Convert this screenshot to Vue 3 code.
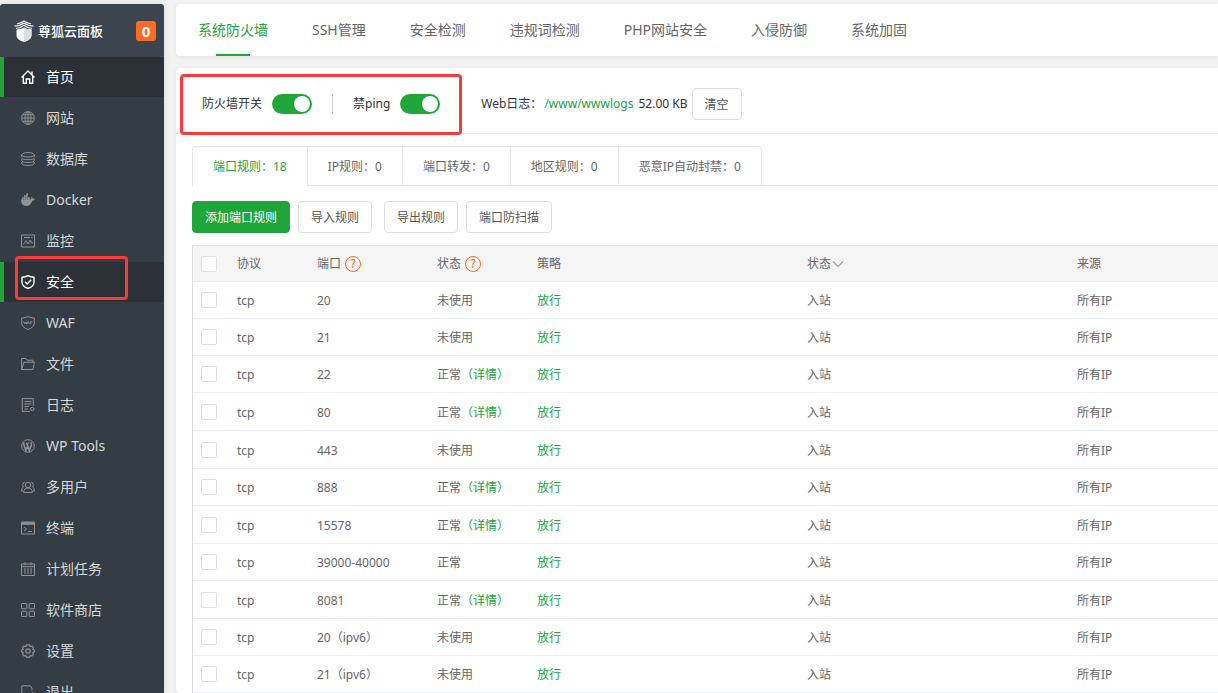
<script setup>
import { ref } from 'vue'

const menu = [
  { label: '首页', icon: 'home', on: true },
  { label: '网站', icon: 'globe' },
  { label: '数据库', icon: 'db' },
  { label: 'Docker', icon: 'docker' },
  { label: '监控', icon: 'monitor' },
  { label: '安全', icon: 'shield', on: true, marked: true },
  { label: 'WAF', icon: 'waf' },
  { label: '文件', icon: 'folder' },
  { label: '日志', icon: 'log' },
  { label: 'WP Tools', icon: 'wp' },
  { label: '多用户', icon: 'users' },
  { label: '终端', icon: 'terminal' },
  { label: '计划任务', icon: 'calendar' },
  { label: '软件商店', icon: 'apps' },
  { label: '设置', icon: 'gear' },
  { label: '退出', icon: 'exit' },
]
const tabs = ['系统防火墙', 'SSH管理', '安全检测', '违规词检测', 'PHP网站安全', '入侵防御', '系统加固']
const ruleTabs = ['端口规则：18', 'IP规则：0', '端口转发：0', '地区规则：0', '恶意IP自动封禁：0']
const rows = [
  { port: '20', state: '未使用' },
  { port: '21', state: '未使用' },
  { port: '22', state: '正常', detail: true },
  { port: '80', state: '正常', detail: true },
  { port: '443', state: '未使用' },
  { port: '888', state: '正常', detail: true },
  { port: '15578', state: '正常', detail: true },
  { port: '39000-40000', state: '正常' },
  { port: '8081', state: '正常', detail: true },
  { port: '20（ipv6）', state: '未使用' },
  { port: '21（ipv6）', state: '未使用' },
]
const firewall = ref(true)
const ping = ref(true)
</script>

<template>
  <div class="page">
    <aside class="side">
      <header class="brand">
        <svg class="logo" viewBox="0 0 20 22" aria-hidden="true">
          <g fill="none" stroke="#e8eaec" stroke-width="1.2">
            <path d="M3 3.800Q7 3.400 10 1q3 2.400 7 2.800" />
            <path d="M.5 6.200Q6.500 5.800 10 3q3.500 2.800 9.500 3.200" />
            <path d="M2 8.500Q7 8 10 5.300q3 2.700 8 3.200" />
          </g>
          <path fill="#fff" d="M2.500 9.500Q7.500 9.500 10 7.500q2.500 2 7.500 2v6q0 4-7.500 6.500-7.500-2.500-7.500-6.500z" />
          <path fill="#dcdfe1" d="M10 7.500q2.500 2 7.500 2v6q0 4-7.500 6.500z" />
        </svg>
        <span class="brand-name">尊狐云面板</span>
        <span class="count">0</span>
      </header>
      <nav>
        <a v-for="m in menu" :key="m.label" href="#" class="item" :class="{ on: m.on }">
          <svg class="icon" viewBox="0 0 14 14" aria-hidden="true">
            <g v-if="m.icon === 'home'" stroke-width="1.400">
              <path d="M.5 7.500 7 1l6.500 6.500M11 4.800V1.500M2.300 6v7.200h3V9h3.400v4.200h3V6" />
            </g>
            <g v-else-if="m.icon === 'globe'">
              <circle cx="7" cy="7" r="6.300" /><ellipse cx="7" cy="7" rx="3" ry="6.300" />
              <path d="M7 .7v12.600M.7 7h12.600M1.700 3.800h10.600M1.700 10.200h10.600" />
            </g>
            <g v-else-if="m.icon === 'db'">
              <ellipse cx="7" cy="2.800" rx="6.300" ry="2.200" />
              <path d="M.7 5.500q0 2.200 6.300 2.200t6.300-2.200M.7 8.300q0 2.200 6.300 2.200t6.300-2.200M.7 11q0 2.400 6.300 2.400t6.300-2.400M.7 2.800v2M13.300 2.800v2M.7 7v1.300M13.300 7v1.300M.7 10v1M13.300 10v1" />
            </g>
            <g v-else-if="m.icon === 'docker'" class="solid">
              <path d="M0 6.300h10q.7-.8.200-2.700 1.300.6 1.500 2 1.300-.2 2.300.4-.8 1.700-2.700 1.700Q9.500 13 5 13 0 13 0 6.300zM1 4.200h1.700v1.700H1zM3 4.200h1.700v1.700H3zM5 4.200h1.700v1.700H5zM7 4.200h1.700v1.700H7zM3 2.200h1.700v1.700H3zM5 2.200h1.700v1.700H5zM5.300.5H7V2H5.300z" />
            </g>
            <g v-else-if="m.icon === 'monitor'">
              <path d="M.5 1h13v12H.5zM3 3.500h6M10 3.500h1.500M2.500 10.500 5 6.500l2 3.500 2.200-4 1.300 3H12" />
            </g>
            <g v-else-if="m.icon === 'shield'" stroke-width="1.400">
              <path d="M7 .6q2.500 1.500 6 1.700v4.900q0 4-6 6.300-6-2.300-6-6.300V2.300Q4.500 2.100 7 .6zM4 6.800l2.200 2.300 4-4.300" />
            </g>
            <g v-else-if="m.icon === 'waf'">
              <path d="M7 .6q2.500 1.300 6.300 1.400v5.200q0 4-6.300 6.300Q.7 11.200.7 7.200V2Q4.500 1.900 7 .6z" />
              <path stroke-width=".8" d="m2.800 5.500.8 2.500.8-2 .8 2 .7-2.500M6.100 8.200 7.200 5.500l1.100 2.700M9.200 8.200V5.700h2M9.200 7h1.500" />
            </g>
            <g v-else-if="m.icon === 'folder'">
              <path d="M.6 12.500V1.500h4.200l1.300 1.700h5.900v2M.6 12.500h11.400L13.500 5.200H3z" />
            </g>
            <g v-else-if="m.icon === 'log'">
              <path d="M12.300 8V.6H1.300v12.800H9M3.500 3.500h7M3.500 6h7M3.500 8.500h4.500M3.500 11H7" /><circle cx="11.300" cy="11" r="1.700" />
            </g>
            <g v-else-if="m.icon === 'wp'">
              <circle cx="7" cy="7" r="6.300" />
              <path stroke-width="1.500" d="m2.300 4.200 2.600 7.300L7 6.300M5.700 4.200l2.700 7.300 2-5.500q.4-1.300-.8-2.700" />
              <path d="M1.800 4.200h2M5 4.200h3" />
            </g>
            <g v-else-if="m.icon === 'users'">
              <circle cx="7" cy="5" r="2.700" /><path d="M2.700 12.500q0-4.500 4.300-4.500t4.300 4.500zM3.800 2Q1.300 2.700 1.700 5.300L2.500 7Q.4 8 .5 11h1.600M10.200 2q2.500.7 2.100 3.300L11.500 7q2.100 1 2 4h-1.600" />
            </g>
            <g v-else-if="m.icon === 'terminal'">
              <path d="M.5 1h13v12H.5z" /><path stroke-width="2.500" d="M.5 2.500h13" /><path d="m3 6 2.500 2L3 10M7 10.500h4" />
            </g>
            <g v-else-if="m.icon === 'calendar'">
              <path d="M.5 2h13v11.500H.5zM.5 4.700h13M4 .3v3M10 .3v3M3 7h2M6 7h2M9 7h2M3 9h2M6 9h2M9 9h2M3 11h2M6 11h2M9 11h2" />
            </g>
            <g v-else-if="m.icon === 'apps'">
              <rect x=".5" y=".5" width="5.300" height="5.300" rx=".5" /><rect x="8.200" y=".5" width="5.300" height="5.300" rx=".5" />
              <rect x=".5" y="8.200" width="5.300" height="5.300" rx=".5" /><rect x="8.200" y="8.200" width="5.300" height="5.300" rx=".5" />
            </g>
            <g v-else-if="m.icon === 'gear'" stroke-width="1.200">
              <path d="M5.500.9h3l.7 1.400 1.900-.2 1.300 1.600-.5 1.500 1.500 1.100v1.400l-1.500 1.100.5 1.500-1.300 1.600-1.900-.2-.7 1.400h-3l-.7-1.400-1.900.2-1.300-1.600.5-1.500L.6 7.700V6.300l1.500-1.100-.5-1.500 1.300-1.600 1.900.2z" /><circle cx="7" cy="7" r="2.200" />
            </g>
            <g v-else>
              <path d="M11 5.500V3L9 .8H.8v12.400H9M6 9h7.300M11 6.700 13.300 9 11 11.300" />
            </g>
          </svg>
          <span>{{ m.label }}</span>
          <i v-if="m.marked" class="mark mark-item"></i>
        </a>
      </nav>
    </aside>

    <main class="main">
      <nav class="card tabs">
        <a v-for="(t, i) in tabs" :key="t" href="#" class="tab" :class="{ on: i === 0 }">{{ t }}</a>
      </nav>

      <section class="card panel">
        <div class="bar">
          <label class="field">防火墙开关<input v-model="firewall" class="switch" type="checkbox" role="switch" /></label>
          <i class="sep"></i>
          <label class="field">禁ping<input v-model="ping" class="switch" type="checkbox" role="switch" /></label>
          <i class="sep"></i>
          <div class="weblog">
            <span>Web日志：<a href="#">/www/wwwlogs</a> 52.00 KB</span>
            <button class="btn" type="button">清空</button>
          </div>
          <i class="mark mark-bar"></i>
        </div>

        <div class="body">
          <div class="rule-tabs">
            <button v-for="(t, i) in ruleTabs" :key="t" type="button" class="rule-tab" :class="{ on: i === 0 }">{{ t }}</button>
            <i class="rest"></i>
          </div>

          <div class="actions">
            <div class="group">
              <button class="btn primary" type="button">添加端口规则</button>
              <button class="btn" type="button">导入规则</button>
            </div>
            <div class="group">
              <button class="btn" type="button">导出规则</button>
              <button class="btn" type="button">端口防扫描</button>
            </div>
          </div>

          <table class="grid">
            <colgroup>
              <col class="c-check" /><col class="c-proto" /><col class="c-port" /><col class="c-state" /><col class="c-wide" /><col class="c-wide" /><col />
            </colgroup>
            <thead>
              <tr>
                <th><input class="check" type="checkbox" aria-label="全选" /></th>
                <th>协议</th>
                <th><span class="head">端口<a href="#" class="help">?</a></span></th>
                <th><span class="head">状态<a href="#" class="help">?</a></span></th>
                <th>策略</th>
                <th>
                  <span class="sort">状态<svg viewBox="0 0 12 8" aria-hidden="true"><path d="m1 1.500 5 5 5-5" /></svg></span>
                </th>
                <th>来源</th>
              </tr>
            </thead>
            <tbody>
              <tr v-for="r in rows" :key="r.port">
                <td><input class="check" type="checkbox" :aria-label="r.port" /></td>
                <td>tcp</td>
                <td>{{ r.port }}</td>
                <td>{{ r.state }}<a v-if="r.detail" href="#">（详情）</a></td>
                <td><a href="#">放行</a></td>
                <td>入站</td>
                <td>所有IP</td>
              </tr>
            </tbody>
          </table>
        </div>
      </section>
    </main>
  </div>
</template>

<style>
body {
  background: #f2f2f2;
  overflow: hidden;
}
</style>

<style scoped>
.page {
  box-sizing: border-box;
  display: flex;
  gap: 12px;
  height: 100vh;
  padding-top: 4px;
  overflow: hidden;
  font: 12px/18px "Noto Sans", "Noto Sans CJK SC", sans-serif;
  color: #666;
}
.page * {
  box-sizing: border-box;
}
a {
  color: #20a53a;
  text-decoration: none;
}
.side {
  flex: 0 0 164px;
  overflow: hidden;
  border-radius: 4px 4px 0 0;
  background: #353d44;
  box-shadow: 0 0 6px rgba(0, 0, 0, 0.1);
}
.brand {
  display: flex;
  align-items: center;
  height: 53px;
  padding: 0 8px 0 14px;
  background: #3c444d;
  color: #fff;
}
.logo {
  width: 20px;
  height: 22px;
}
.brand-name {
  flex: 1;
  margin-left: 4px;
  font-size: 13px;
  font-weight: 500;
}
.count {
  width: 20px;
  border-radius: 3px;
  background: #ff6b22;
  font-size: 15px;
  font-weight: 700;
  line-height: 20px;
  text-align: center;
}
.item {
  position: relative;
  display: flex;
  align-items: center;
  gap: 11px;
  height: 40px;
  margin-bottom: 1px;
  padding-left: 17px;
  border-left: 4px solid transparent;
  color: #d6d8da;
  font-size: 14px;
}
.item.on {
  border-left-color: #20a53a;
  background: #2c3138;
  color: #fff;
}
.icon {
  width: 14px;
  height: 14px;
  fill: none;
  stroke: #919496;
}
.icon .solid {
  fill: #919496;
  stroke: none;
}
.on .icon {
  stroke: #fff;
}
.mark {
  position: absolute;
  border: 3px solid #fb3a3a;
  border-radius: 4px;
  pointer-events: none;
}
.mark-item {
  top: -6px;
  left: 11px;
  width: 113px;
  height: 44px;
}
.main {
  flex: 1;
  min-width: 0;
}
.card {
  border-radius: 4px 0 0 4px;
  background: #fff;
  box-shadow: 0 1px 4px rgba(0, 0, 0, 0.08);
}
.tabs {
  display: flex;
  height: 52px;
  margin-bottom: 12px;
}
.tab {
  position: relative;
  padding: 0 22px;
  color: #666;
  font-size: 14px;
  line-height: 52px;
  white-space: nowrap;
}
.tab.on {
  color: #20a53a;
}
.tab.on::after {
  position: absolute;
  bottom: 0;
  left: 50%;
  width: 34px;
  height: 2px;
  margin-left: -17px;
  background: #20a53a;
  content: "";
}
.bar {
  position: relative;
  display: flex;
  align-items: center;
  gap: 20px;
  height: 66px;
  padding: 6px 26px 0;
  border-bottom: 1px solid #ebeef0;
  color: #333;
  white-space: nowrap;
}
.field {
  display: flex;
  align-items: center;
  gap: 10px;
}
.switch {
  width: 40px;
  height: 20px;
  margin: 0;
  padding: 2px;
  border-radius: 10px;
  background: #ccc;
  appearance: none;
}
.switch::before {
  display: block;
  width: 16px;
  height: 16px;
  border-radius: 50%;
  background: #fff;
  content: "";
}
.switch:checked {
  background: #20a53a;
}
.switch:checked::before {
  margin-left: auto;
}
.sep {
  width: 1px;
  height: 20px;
  background: #ccc;
}
.weblog {
  display: flex;
  align-items: center;
  gap: 4px;
}
.weblog a {
  padding: 0 2px;
}
.mark-bar {
  top: 6px;
  left: 4px;
  width: 282px;
  height: 61px;
}
.btn {
  height: 32px;
  padding: 2px 12px 0;
  border: 1px solid #dcdfe6;
  border-radius: 4px;
  background: #fff;
  color: #555;
  font: inherit;
}
.btn.primary {
  border-color: #20a53a;
  background: #20a53a;
  color: #fff;
}
.body {
  padding: 12px 0 0 16px;
}
.rule-tabs {
  display: flex;
  height: 40px;
}
.rule-tab {
  padding: 2px 20px 0;
  border: 1px solid #e4e7ed;
  border-right-width: 0;
  background: #fff;
  color: #666;
  font: inherit;
  white-space: nowrap;
}
.rule-tab:first-child {
  border-top-left-radius: 4px;
}
.rule-tab:nth-last-child(2) {
  border-right-width: 1px;
  border-top-right-radius: 4px;
}
.rule-tab.on {
  border-bottom-color: #fff;
  color: #20a53a;
}
.rest {
  flex: 1;
  border-bottom: 1px solid #e4e7ed;
}
.actions {
  display: flex;
  gap: 12px;
  padding: 15px 0 12px;
}
.group {
  display: flex;
  gap: 8px;
}
.grid {
  width: 100%;
  border: 1px solid #dcdee0;
  border-width: 1px 0 0 1px;
  border-spacing: 0;
  table-layout: fixed;
}
.c-check {
  width: 34px;
}
.c-proto {
  width: 80px;
}
.c-port {
  width: 120px;
}
.c-state {
  width: 100px;
}
.c-wide {
  width: 270px;
}
th,
td {
  height: 37px;
  padding: 0 10px;
  border-bottom: 1px solid #ebeef5;
  font-weight: 400;
  text-align: left;
  white-space: nowrap;
}
td {
  padding-top: 2px;
}
th {
  height: 36px;
  background: #f5f5f5;
}
th:first-child,
td:first-child {
  padding: 0 8px;
}
tr:nth-child(4) td,
tr:nth-child(5) td,
tr:nth-child(7) td,
tr:nth-child(9) td {
  height: 38px;
}
.check {
  display: block;
  width: 16px;
  height: 16px;
  margin: 0;
  border: 1px solid #dcdfe6;
  border-radius: 2px;
  background: #fff;
  appearance: none;
}
.check:checked {
  background: #20a53a;
}
.head {
  display: flex;
  align-items: center;
  gap: 4px;
}
.help {
  width: 16px;
  height: 16px;
  border: 1px solid #ff6b22;
  border-radius: 50%;
  color: #ff6b22;
  line-height: 14px;
  text-align: center;
}
.sort {
  display: flex;
  align-items: center;
  gap: 1px;
}
.sort svg {
  width: 12px;
  height: 8px;
  fill: none;
  stroke: #666;
}
</style>
